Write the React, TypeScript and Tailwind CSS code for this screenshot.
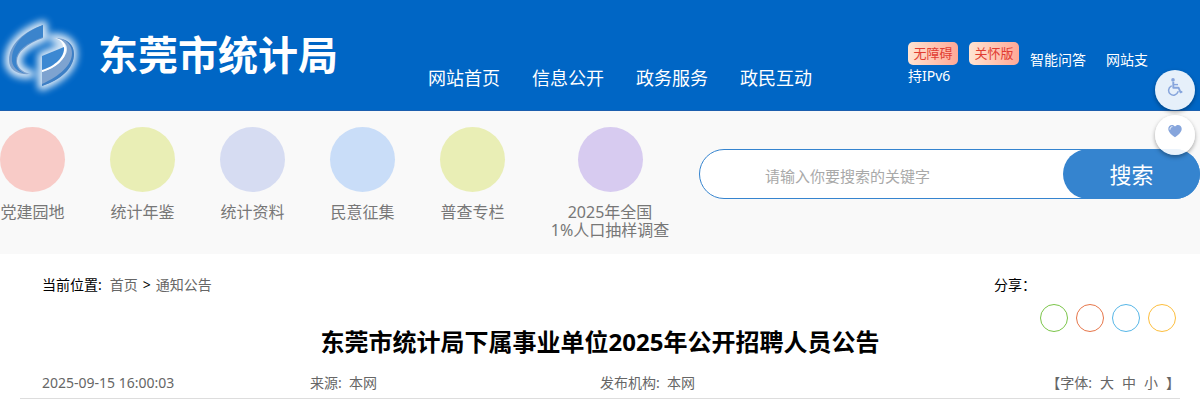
import React from "react";

const navItems = ["网站首页", "信息公开", "政务服务", "政民互动"];

const quickLinks = [
    { lines: ["党建园地"], color: "bg-[#f8cbc7]", width: "w-[65px]" },
    { lines: ["统计年鉴"], color: "bg-[#e9eeb5]", width: "w-[65px]" },
    { lines: ["统计资料"], color: "bg-[#d6dcf2]", width: "w-[65px]" },
    { lines: ["民意征集"], color: "bg-[#c9ddf8]", width: "w-[65px]" },
    { lines: ["普查专栏"], color: "bg-[#e9eeb5]", width: "w-[65px]" },
    { lines: ["2025年全国", "1%人口抽样调查"], color: "bg-[#d7cbf0]", width: "w-[120px]" },
];

const shareLinks = [
    { name: "微信", border: "border-[#7bc549]" },
    { name: "微博", border: "border-[#e6764a]" },
    { name: "QQ", border: "border-[#56b6e7]" },
    { name: "QQ空间", border: "border-[#fdbe3d]" },
];

const Logo = () => (
    <svg viewBox="0 0 90 90" className="h-[90px] w-[90px] shrink-0" aria-hidden="true">
        <defs>
            <filter id="glow" x="-30%" y="-30%" width="160%" height="160%">
                <feGaussianBlur stdDeviation="3.5" />
            </filter>
            <linearGradient id="ring" x1="0" y1="0" x2="0" y2="1">
                <stop offset="0" stopColor="#5b93cf" />
                <stop offset="1" stopColor="#7fa3cf" />
            </linearGradient>
        </defs>
        <g filter="url(#glow)" fill="#fff" stroke="#fff" strokeWidth="9" strokeLinejoin="round" opacity="0.85">
            <path d="M43 15C25 21 9 34 9 50c0 10 8 15 21 14-8-2-13-7-13-13 0-9 10-17 26-23z" />
            <path d="M53 28c12-1 20 5 20 16 0 14-13 25-31 32V46l22-9v4c5-5 1-12-11-13z" />
        </g>
        <path d="M43 15C25 21 9 34 9 50c0 10 8 15 21 14-8-2-13-7-13-13 0-9 10-17 26-23z" fill="url(#ring)" />
        <path d="M43 15C27 21 13 32 12 48c-1 8 5 14 14 16-7-3-10-8-10-13 0-10 10-18 27-24z" fill="#3b84cc" />
        <path d="M53 28c12-1 21 5 21 16 0 14-14 26-32 32V62c13-4 25-14 25-23 0-6-5-10-14-11z" fill="#7ea3d0" />
        <path d="M62 29c7 3 10 8 10 14 0 12-12 23-30 31v2c19-6 32-18 32-32 0-8-5-13-12-15z" fill="#3d7fc5" />
        <path d="M53 28c9 0 13 5 13 12 0 9-10 18-24 22v-3c11-4 20-12 21-20 1-6-3-10-10-11z" fill="#fff" />
        <path d="M42 46l22-9c1 10-9 19-22 23z" fill="#3c88d2" />
    </svg>
);

const WheelchairIcon = () => (
    <svg viewBox="0 0 16 18" className="h-[18px] w-4" fill="none" stroke="#86a5dc" aria-hidden="true">
        <circle cx="6" cy="1.900" r="1.800" fill="#86a5dc" stroke="none" />
        <path d="M6.300 4V9.700h5.200l2.100 4.600 1.700-.8" strokeWidth="1.900" strokeLinejoin="round" />
        <path d="M6.500 6.600h4.500" strokeWidth="1.400" />
        <path d="M4.200 8.100a4.800 4.800 0 1 0 6.800 5.700" strokeWidth="1.500" strokeLinecap="round" />
    </svg>
);

const HeartIcon = () => (
    <svg viewBox="0 0 16 16" className="h-4 w-4" aria-hidden="true">
        <path d="M8 14.3C4 11.5 1.3 9 1.3 5.8 1.3 3.4 3 2 5 2c1.200 0 2.300.6 3 1.600C8.700 2.600 9.800 2 11 2c2 0 3.700 1.400 3.700 3.800 0 3.200-2.700 5.700-6.700 8.500z" fill="#86a5dc" />
        <path d="M3 6.200C3 4.700 3.800 3.800 5 3.700" fill="none" stroke="#fff" strokeWidth="1" strokeLinecap="round" />
    </svg>
);

// overflow-hidden keeps the badge's bottom edge on the text baseline
const Badge = ({ text }: { text: string }) => (
    <a
        href="#"
        className="mr-[11px] inline-block h-[23px] w-[50px] overflow-hidden rounded-[5px] bg-linear-to-r from-[#ffe4d2] to-[#ffa896] text-center text-[13px] leading-[23px] text-[#e13c32]"
    >
        {text}
    </a>
);

const Header = () => (
    <header className="flex h-[111px] items-start border-b border-[#1b5fae] bg-[#0066c5] text-white">
        <a href="#" className="flex w-[428px] shrink-0 items-center gap-2 pt-[10px]">
            <Logo />
            <h1 className="text-[40px] leading-[90px] font-bold">东莞市统计局</h1>
        </a>
        <nav className="flex grow gap-8 pt-16 text-lg">
            {navItems.map((item) => (
                <a key={item} href="#" className="whitespace-nowrap">{item}</a>
            ))}
        </nav>
        <div className="mr-[42px] w-[250px] shrink-0 pt-[42px] text-sm leading-4">
            <Badge text="无障碍" />
            <Badge text="关怀版" />
            <a href="#" className="mr-5">智能问答</a>
            <a href="#">
                <span>网站支</span>
                <wbr />
                <span>持IPv6</span>
            </a>
        </div>
    </header>
);

const QuickBar = () => (
    <section className="flex items-start bg-[#f9f9f9] pt-4 pb-[15px]">
        <ul className="flex shrink-0 gap-[45px] text-center text-base leading-[18px] text-[#777]">
            {quickLinks.map((link) => (
                <li key={link.lines[0]} className={link.width}>
                    <a href="#" className="flex flex-col items-center">
                        <span className={`mb-[11px] h-[65px] w-[65px] rounded-full ${link.color}`} />
                        {link.lines.map((line) => (
                            <span key={line} className="whitespace-nowrap">{line}</span>
                        ))}
                    </a>
                </li>
            ))}
        </ul>
        <form className="mt-[22px] ml-[29px] flex h-[50px] grow rounded-full border border-[#3584cf] bg-white">
            <input
                type="text"
                aria-label="搜索关键字"
                placeholder="请输入你要搜索的关键字"
                className="min-w-0 grow rounded-full pt-1 pl-[65px] text-[15px] outline-none placeholder:text-[#a9a9a9]"
            />
            <button type="button" className="-my-px -mr-px w-[137px] shrink-0 rounded-full bg-[#3584cf] text-[22px] text-white">
                搜索
            </button>
        </form>
    </section>
);

const Article = () => (
    <main className="px-5 pt-[21px]">
        <div className="flex items-start justify-between pr-1 pl-[22px] text-sm leading-5">
            <div className="flex">
                <span className="mr-2">当前位置:</span>
                <a href="#" className="text-[#666]">首页</a>
                <span className="mx-[5px]">&gt;</span>
                <a href="#" className="text-[#666]">通知公告</a>
            </div>
            <div className="w-[182px]">
                <p>分享：</p>
                <ul className="mt-[9px] flex justify-end gap-2">
                    {shareLinks.map((link) => (
                        <li key={link.name}>
                            <a href="#" aria-label={link.name} className={`block h-7 w-7 rounded-full border ${link.border}`} />
                        </li>
                    ))}
                </ul>
            </div>
        </div>
        <h2 className="text-center text-2xl leading-5 font-bold">东莞市统计局下属事业单位2025年公开招聘人员公告</h2>
        <div className="mt-[21px] grid grid-cols-4 border-b border-[#ddd] pb-[5px] text-sm leading-5 text-[#666]">
            <span className="pl-[22px]">2025-09-15 16:00:03</span>
            <span>来源:&nbsp; 本网</span>
            <span>发布机构:&nbsp; 本网</span>
            <div className="flex justify-end gap-2">
                <span>【字体:</span>
                <button type="button">大</button>
                <button type="button">中</button>
                <button type="button">小</button>
                <span>】</span>
            </div>
        </div>
    </main>
);

const FloatingTools = () => (
    <div className="fixed top-[70px] right-[5px] flex flex-col gap-[5px]">
        <button type="button" aria-label="无障碍" className="flex h-10 w-10 justify-center rounded-full bg-white/90 pt-2 shadow-[0_2px_4px_rgba(0,0,0,0.35)]">
            <WheelchairIcon />
        </button>
        <button type="button" aria-label="关怀版" className="flex h-10 w-10 justify-center rounded-full bg-white/90 pt-2 shadow-[0_2px_4px_rgba(0,0,0,0.35)]">
            <HeartIcon />
        </button>
    </div>
);

export default function App() {
    return (
        <div className="bg-white font-['Noto_Sans','Noto_Sans_CJK_SC',sans-serif] text-black">
            <Header />
            <QuickBar />
            <Article />
            <FloatingTools />
        </div>
    );
}
